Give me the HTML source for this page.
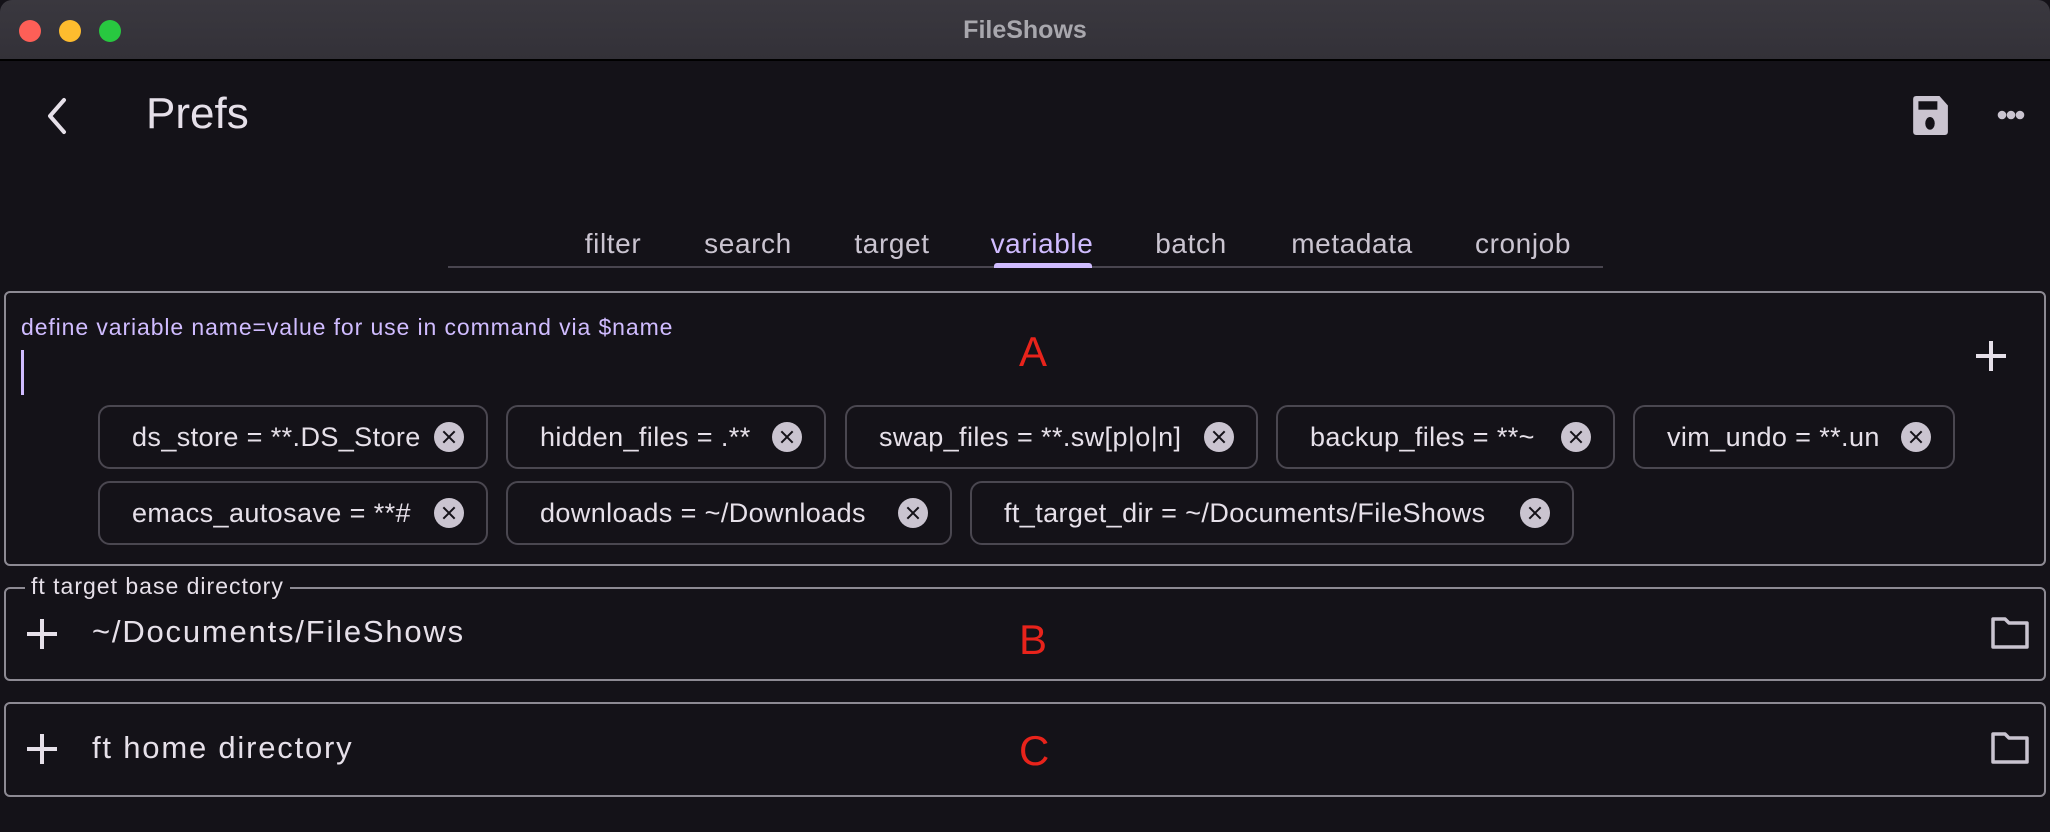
<!DOCTYPE html>
<html><head><meta charset="utf-8"><style>
*{margin:0;padding:0;box-sizing:border-box}
body{width:2050px;height:832px;background:#141218;font-family:"Liberation Sans",sans-serif;color:#e6e0e9;position:relative;overflow:hidden}
.tb{position:absolute;left:0;top:0;width:2050px;height:61px;background:linear-gradient(#3a383f,#333138);border-bottom:2px solid #000;border-radius:12px 12px 0 0}
.dot{position:absolute;top:20px;width:22px;height:22px;border-radius:50%}
.title{position:absolute;top:0;width:100%;text-align:center;line-height:60px;font-size:25px;font-weight:bold;color:#a8a7ad}
.a{position:absolute;white-space:nowrap}
.tab{position:absolute;top:228px;font-size:28px;letter-spacing:0.6px;color:#cac4d0;transform:translateX(-50%)}
.box{position:absolute;left:4px;width:2042px;border:2px solid #8d8a93;border-radius:6px}
.chip{position:absolute;height:64px;border:2px solid #4a4750;border-radius:12px;font-size:27px;letter-spacing:0.4px;line-height:60px;padding-left:32px;color:#e6e0e9}
.chip i{position:absolute;right:22px;top:15px;width:30px;height:30px;border-radius:50%;background:#cac4d0}
.chip i:before,.chip i:after{content:"";position:absolute;left:14px;top:7px;width:2px;height:16px;background:#141218;transform:rotate(45deg)}
.chip i:after{transform:rotate(-45deg)}
.red{position:absolute;color:#e8231b;font-size:42px;left:1019px}
.plus{position:absolute;width:30px;height:30px}
.plus:before,.plus:after{content:"";position:absolute;background:#e6e0e9}
.plus:before{left:13px;top:0;width:4px;height:30px}
.plus:after{left:0;top:13px;width:30px;height:4px}
</style></head><body>
<div class="tb">
<div class="dot" style="left:19px;background:#fe5f57"></div>
<div class="dot" style="left:59px;background:#febc2e"></div>
<div class="dot" style="left:99px;background:#28c840"></div>
<div class="title">FileShows</div>
</div>
<svg class="a" style="left:42px;top:96px" width="30" height="40" viewBox="0 0 30 40"><path d="M22 4 L8 20 L22 36" stroke="#e6e0e9" stroke-width="4" fill="none" stroke-linecap="round" stroke-linejoin="round"/></svg>
<div class="a" style="left:146px;top:89px;font-size:44px;color:#e6e0e9">Prefs</div>
<svg class="a" style="left:1910px;top:96px" width="40" height="40" viewBox="0 0 36 38"><path d="M2 3 Q2 0 5 0 H27 L35 9 V34 Q35 37 32 37 H5 Q2 37 2 34Z" fill="#cac4d0"/><rect x="7" y="5" width="18" height="8" fill="#141218"/><ellipse cx="18" cy="26" rx="4.5" ry="6" fill="#141218"/></svg>
<svg class="a" style="left:1997px;top:108px" width="28" height="14"><circle cx="5" cy="7" r="4.3" fill="#cac4d0"/><circle cx="14" cy="7" r="4.3" fill="#cac4d0"/><circle cx="23" cy="7" r="4.3" fill="#cac4d0"/></svg>

<div class="tab" style="left:613px">filter</div>
<div class="tab" style="left:748px">search</div>
<div class="tab" style="left:892px">target</div>
<div class="tab" style="left:1042px;color:#d0bcff">variable</div>
<div class="tab" style="left:1191px">batch</div>
<div class="tab" style="left:1352px">metadata</div>
<div class="tab" style="left:1523px">cronjob</div>
<div class="a" style="left:448px;top:266px;width:1155px;height:2px;background:#49454f"></div>
<div class="a" style="left:994px;top:263px;width:98px;height:5px;border-radius:3px 3px 0 0;background:#d0bcff"></div>

<div class="box" style="top:291px;height:275px"></div>
<div class="a" style="left:21px;top:314px;font-size:23px;letter-spacing:0.9px;color:#d0bcff">define variable name=value for use in command via $name</div>
<div class="a" style="left:21px;top:350px;width:3px;height:45px;background:#d0bcff"></div>
<div class="red" style="top:328px">A</div>
<div class="plus" style="left:1976px;top:341px"></div>

<div class="chip" style="left:98px;top:405px;width:390px">ds_store = **.DS_Store<i></i></div>
<div class="chip" style="left:506px;top:405px;width:320px">hidden_files = .**<i></i></div>
<div class="chip" style="left:845px;top:405px;width:413px">swap_files = **.sw[p|o|n]<i></i></div>
<div class="chip" style="left:1276px;top:405px;width:339px">backup_files = **~<i></i></div>
<div class="chip" style="left:1633px;top:405px;width:322px">vim_undo = **.un<i></i></div>
<div class="chip" style="left:98px;top:481px;width:390px">emacs_autosave = **#<i></i></div>
<div class="chip" style="left:506px;top:481px;width:446px">downloads = ~/Downloads<i></i></div>
<div class="chip" style="left:970px;top:481px;width:604px">ft_target_dir = ~/Documents/FileShows<i></i></div>

<div class="box" style="top:587px;height:94px"></div>
<div class="a" style="left:25px;top:573px;padding:0 6px;background:#141218;font-size:23px;letter-spacing:1px;color:#e6e0e9">ft target base directory</div>
<div class="plus" style="left:27px;top:619px"></div>
<div class="a" style="left:92px;top:614px;font-size:31px;letter-spacing:1.8px">~/Documents/FileShows</div>
<div class="red" style="top:616px">B</div>
<svg class="a" style="left:1990px;top:616px" width="40" height="34" viewBox="0 0 40 34"><path d="M3 3 H15 L19 7 H37 V31 H3 Z" fill="none" stroke="#cac4d0" stroke-width="3.5" stroke-linejoin="round"/></svg>

<div class="box" style="top:702px;height:95px"></div>
<div class="plus" style="left:27px;top:734px"></div>
<div class="a" style="left:92px;top:730px;font-size:31px;letter-spacing:1.8px">ft home directory</div>
<div class="red" style="top:727px">C</div>
<svg class="a" style="left:1990px;top:731px" width="40" height="34" viewBox="0 0 40 34"><path d="M3 3 H15 L19 7 H37 V31 H3 Z" fill="none" stroke="#cac4d0" stroke-width="3.5" stroke-linejoin="round"/></svg>
</body></html>
